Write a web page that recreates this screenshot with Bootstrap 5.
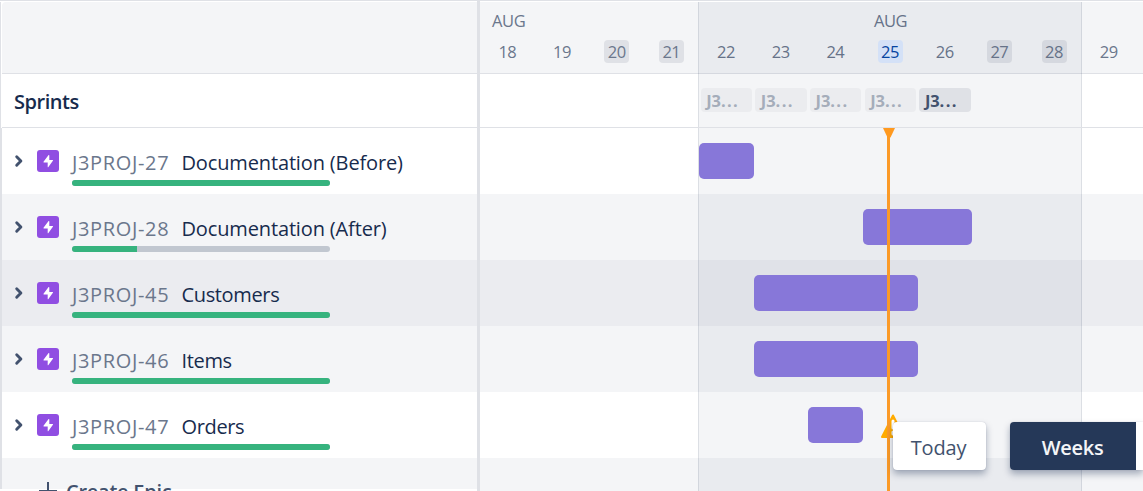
<!DOCTYPE html>
<html lang="en">
<head>
<meta charset="utf-8">
<meta name="viewport" content="width=device-width, initial-scale=1">
<title>Roadmap</title>
<link rel="stylesheet" href="https://cdn.jsdelivr.net/npm/bootstrap@5.3.0/dist/css/bootstrap.min.css">
<style>
:root { --day: 54.68px; --line: #dfe1e6; --ink: #172b4d; --muted: #6b778c; }
body { width: 1143px; height: 491px; font-family: "Open Sans", "Noto Sans", sans-serif; color: var(--ink); background: #fff; }
.roadmap { height: 491px; border-top: 1px solid var(--line); padding-top: 1px; }
.pane-left { width: 477px; }
.edge-top { border-left: 1px solid var(--line); padding-left: 1px; }
.edge-rows { border-left: 2px solid var(--line); }
.divider { width: 3px; background: var(--line); margin-top: -1px; }
.head { height: 72px; background: #f4f5f7; border-bottom: 1px solid var(--line); }
.head-corner { border-top-left-radius: 4px; }
.sprint-row { height: 54px; border-bottom: 1px solid var(--line); }
.sprint-title { font-size: 20px; font-weight: 600; letter-spacing: -.45px; padding: 2px 0 0 12px; }
.lane { height: 66px; }
.lane-alt { background: #f4f5f7; }
.lane-hover { background: #ebecf0; }
.epic { padding: 0 0 0 9px; }
.chev { width: 12px; height: 16px; margin: 25px 14px 0 0; }
.bolt { width: 22px; height: 22px; margin: 22px 13px 0 0; }
.epic-text { padding-top: 21px; font-size: 20px; line-height: 28px; }
.epic-key { width: 109.5px; color: var(--muted); letter-spacing: .65px; }
.epic-name { letter-spacing: -.35px; }
.epic-name.long { letter-spacing: -.14px; }
.meter { width: 258px; height: 6px; border-radius: 3px; background: #c1c7d0; margin-top: 3px; }
.meter-fill { height: 6px; border-radius: 3px; background: #36b37e; }
.create { font-size: 20px; font-weight: 600; color: #42526e; letter-spacing: -.25px; line-height: 28px; padding: 20px 0 0 36px; height: 31px; }
.timeline { width: 663px; }
.days { display: grid; grid-template-columns: repeat(12, var(--day)); }
.month { font-size: 16.5px; line-height: 20px; letter-spacing: -.4px; color: var(--muted); padding-top: 9px; }
.month-current { grid-column: 8; padding-left: 1px; }
.date { font-size: 16.5px; line-height: 23px; letter-spacing: -.5px; color: var(--muted); margin-top: 9px; }
.date span { display: inline-block; width: 25px; border-radius: 4px; text-align: center; }
.date .weekend { background: #dfe1e6; }
.date .weekend-dark { background: #dfe1e6; }
.date .current { background: #deebff; color: #0747a6; }
.week-shade { left: 218px; top: 0; bottom: 0; width: 384px; background: rgba(9,30,66,.042); border: solid rgba(9,30,66,.1); border-width: 0 1px; }
.sprint-chip { height: 24px; margin: 14px 1.3px 0 2px; padding-left: 5.500px; border-radius: 4px; background: #ebecef; color: #a5adba; font-size: 16.5px; font-weight: 700; line-height: 25px; letter-spacing: -.1px; }
.sprint-chip i { font-style: normal; letter-spacing: 1.4px; }
.sprint-chip.active { background: #dfe1e6; color: #42526e; }
.bar { height: 36px; margin-top: 15px; left: .4px; border-radius: 5px; background: #8777d9; }
.now-line { left: 407px; top: 126px; bottom: 0; width: 3px; background: #fb9a27; }
.now-tip { left: 403px; top: 126px; width: 12px; height: 11px; }
.warn { left: 400px; top: 411px; width: 26px; height: 26px; }
.today-btn, .scale-btn { height: 48px; font-size: 20px; line-height: 51px; border-radius: 4px; box-shadow: 0 4px 7px rgba(9,30,66,.34), 0 0 1px rgba(9,30,66,.25); }
.today-btn { left: 413px; top: 420px; width: 93px; padding-right: 2px; background: #fff; color: #42526e; letter-spacing: -.2px; font-weight: 500; }
.scale-btn { left: 530px; top: 420px; width: 133px; border-radius: 4px 0 0 4px; background: #fff; }
.scale-on { width: 126px; height: 48px; padding-right: 1px; background: #253858; color: #f4f5f7; font-weight: 600; letter-spacing: -.3px; border-radius: 4px 0 0 4px; }
</style>
</head>
<body class="overflow-hidden">
<svg class="d-none">
  <symbol id="chev" viewBox="0 0 12 16"><path d="M4.4 3.8 8.6 8 4.4 12.2" transform="translate(1.3 0)" fill="none" stroke="#42526e" stroke-width="2.9" stroke-linecap="round" stroke-linejoin="round"/></symbol>
  <symbol id="bolt" viewBox="0 0 22 22"><rect width="22" height="22" rx="3" fill="#904ee2"/><path d="M12.3 5.4v4.5h3.1c.6 0 .8.5.5.9l-4.7 6.4c-.2.3-.5.2-.5-.2v-4.600H7.200c-.7 0-.9-.5-.5-1l4.900-6.300c.3-.4.7-.2.700.300z" fill="#fff"/></symbol>
</svg>
<main class="roadmap d-flex overflow-hidden">
  <section class="pane-left flex-shrink-0">
    <div class="edge-top"><div class="head head-corner"></div></div>
    <div class="edge-top"><div class="sprint-row d-flex align-items-center"><div class="sprint-title">Sprints</div></div></div>
    <div class="edge-rows">
      <div class="lane epic d-flex"><svg class="chev"><use href="#chev"/></svg><svg class="bolt"><use href="#bolt"/></svg>
        <div class="epic-text"><div class="d-flex"><div class="epic-key">J3PROJ-27</div><div class="epic-name long">Documentation (Before)</div></div><div class="meter"><div class="meter-fill" style="width:100%"></div></div></div></div>
      <div class="lane lane-alt epic d-flex"><svg class="chev"><use href="#chev"/></svg><svg class="bolt"><use href="#bolt"/></svg>
        <div class="epic-text"><div class="d-flex"><div class="epic-key">J3PROJ-28</div><div class="epic-name long">Documentation (After)</div></div><div class="meter"><div class="meter-fill rounded-end-0" style="width:25%"></div></div></div></div>
      <div class="lane lane-hover epic d-flex"><svg class="chev"><use href="#chev"/></svg><svg class="bolt"><use href="#bolt"/></svg>
        <div class="epic-text"><div class="d-flex"><div class="epic-key">J3PROJ-45</div><div class="epic-name">Customers</div></div><div class="meter"><div class="meter-fill" style="width:100%"></div></div></div></div>
      <div class="lane lane-alt epic d-flex"><svg class="chev"><use href="#chev"/></svg><svg class="bolt"><use href="#bolt"/></svg>
        <div class="epic-text"><div class="d-flex"><div class="epic-key">J3PROJ-46</div><div class="epic-name">Items</div></div><div class="meter"><div class="meter-fill" style="width:100%"></div></div></div></div>
      <div class="lane epic d-flex"><svg class="chev"><use href="#chev"/></svg><svg class="bolt"><use href="#bolt"/></svg>
        <div class="epic-text"><div class="d-flex"><div class="epic-key">J3PROJ-47</div><div class="epic-name">Orders</div></div><div class="meter"><div class="meter-fill" style="width:100%"></div></div></div></div>
      <div class="lane-alt create d-flex"><svg class="flex-shrink-0 me-2" width="20" height="28"><path d="M10 4v18M1 13h18" stroke="#42526e" stroke-width="2" fill="none"/></svg>Create Epic</div>
    </div>
  </section>
  <div class="divider flex-shrink-0"></div>
  <section class="timeline position-relative flex-shrink-0">
    <div class="overflow-hidden">
      <div class="head">
        <div class="days month"><div class="ps-2 ms-1">AUG</div><div class="month-current text-center">AUG</div></div>
        <div class="days date text-center">
          <div><span>18</span></div><div><span>19</span></div><div><span class="weekend">20</span></div><div><span class="weekend">21</span></div><div><span>22</span></div><div><span>23</span></div><div><span>24</span></div><div><span class="current">25</span></div><div><span>26</span></div><div><span class="weekend-dark">27</span></div><div><span class="weekend-dark">28</span></div><div><span>29</span></div>
        </div>
      </div>
      <div class="week-shade position-absolute"></div>
      <div class="sprint-row days position-relative">
        <div class="sprint-chip" style="grid-column:5">J3<i>...</i></div><div class="sprint-chip">J3<i>...</i></div><div class="sprint-chip">J3<i>...</i></div><div class="sprint-chip">J3<i>...</i></div><div class="sprint-chip active">J3<i>...</i></div>
      </div>
      <div class="lane days"><div class="bar position-relative" style="grid-column:5/span 1"></div></div>
      <div class="lane lane-alt days"><div class="bar position-relative" style="grid-column:8/span 2"></div></div>
      <div class="lane lane-hover days"><div class="bar position-relative" style="grid-column:6/span 3"></div></div>
      <div class="lane lane-alt days"><div class="bar position-relative" style="grid-column:6/span 3"></div></div>
      <div class="lane days"><div class="bar position-relative" style="grid-column:7/span 1"></div></div>
      <div class="lane lane-alt"></div>
    </div>
    <svg class="warn position-absolute" viewBox="0 0 26 26"><path d="M13 2.500 24 24H2z" fill="#ffab00" stroke="#ffab00" stroke-width="2" stroke-linejoin="round"/><path d="M13 8v7M13 19v2" stroke="#fff" stroke-width="3" stroke-linecap="round"/></svg>
    <div class="now-line position-absolute"></div>
    <svg class="now-tip position-absolute" viewBox="0 0 12 11"><path d="M0 0h12L7.500 9.500h-3z" fill="#ff991f"/></svg>
    <div class="today-btn position-absolute text-center">Today</div>
    <div class="scale-btn position-absolute"><div class="scale-on text-center">Weeks</div></div>
  </section>
</main>
<script src="https://cdn.jsdelivr.net/npm/bootstrap@5.3.0/dist/js/bootstrap.bundle.min.js"></script>
</body>
</html>
